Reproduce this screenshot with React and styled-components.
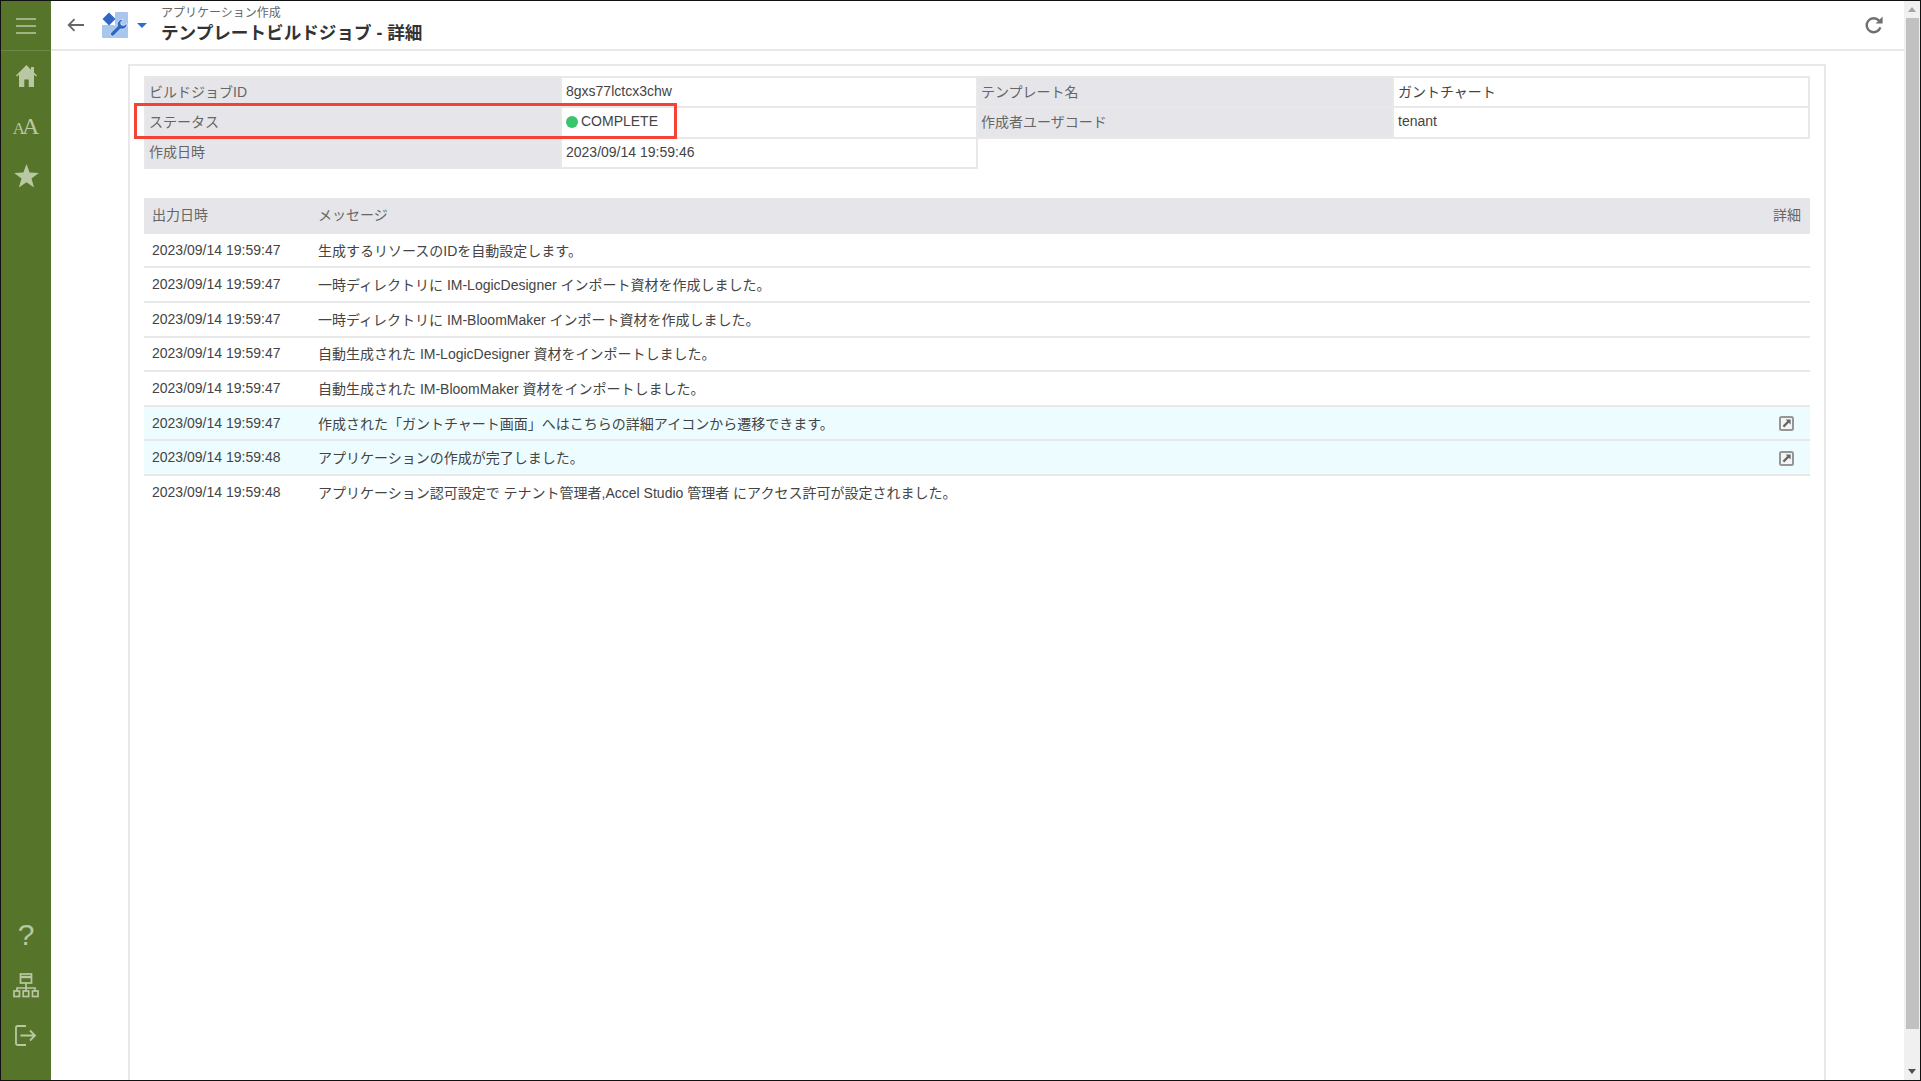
import React from "react";
import styled, { createGlobalStyle } from "styled-components";

const infoRows = [
  [
    { label: "ビルドジョブID", value: "8gxs77lctcx3chw" },
    { label: "テンプレート名", value: "ガントチャート" },
  ],
  [
    { label: "ステータス", value: "COMPLETE", status: true },
    { label: "作成者ユーザコード", value: "tenant" },
  ],
  [{ label: "作成日時", value: "2023/09/14 19:59:46" }],
];

const logs = [
  { date: "2023/09/14 19:59:47", message: "生成するリソースのIDを自動設定します。" },
  { date: "2023/09/14 19:59:47", message: "一時ディレクトリに IM-LogicDesigner インポート資材を作成しました。" },
  { date: "2023/09/14 19:59:47", message: "一時ディレクトリに IM-BloomMaker インポート資材を作成しました。" },
  { date: "2023/09/14 19:59:47", message: "自動生成された IM-LogicDesigner 資材をインポートしました。" },
  { date: "2023/09/14 19:59:47", message: "自動生成された IM-BloomMaker 資材をインポートしました。" },
  { date: "2023/09/14 19:59:47", message: "作成された「ガントチャート画面」へはこちらの詳細アイコンから遷移できます。", link: true },
  { date: "2023/09/14 19:59:48", message: "アプリケーションの作成が完了しました。", link: true },
  { date: "2023/09/14 19:59:48", message: "アプリケーション認可設定で テナント管理者,Accel Studio 管理者 にアクセス許可が設定されました。" },
];

const MenuIcon = () => (
  <svg width="20" height="16" viewBox="0 0 20 16">
    <path d="M0 1h20M0 8h20M0 15h20" stroke="currentColor" strokeWidth="1.6" />
  </svg>
);

const HomeIcon = () => (
  <svg width="21" height="22" viewBox="0 0 21 22" fill="currentColor">
    <path d="M10.5 0 0 10.5l1 1 2-1.8V22h5.3v-7.5h4.4V22H18V9.7l2 1.8 1-1-3-3V2h-3v2.8z" />
  </svg>
);

const StarIcon = () => (
  <svg width="25" height="24" viewBox="0 0 25 24" fill="currentColor">
    <path d="M12.5 0 15.6 8.6 24.8 8.9 17.5 14.5 20.1 23.4 12.5 18.2 4.9 23.4 7.5 14.5.2 8.9 9.4 8.6z" />
  </svg>
);

const SitemapIcon = () => (
  <svg width="26" height="25" viewBox="0 0 26 25" fill="none" stroke="currentColor" strokeWidth="1.7">
    <rect x="7.5" y="1" width="11" height="9" />
    <path d="M7.5 4h11" strokeWidth="2.4" />
    <path d="M13 10v5M4 18v-3h18v3M13 15v3" />
    <rect x="1" y="18" width="5.5" height="5.5" />
    <rect x="10.2" y="18" width="5.5" height="5.5" />
    <rect x="19.5" y="18" width="5.5" height="5.5" />
  </svg>
);

const LogoutIcon = () => (
  <svg width="22" height="21" viewBox="0 0 22 21" fill="none" stroke="currentColor" strokeWidth="1.8">
    <path d="M11 1H2.5A1.5 1.5 0 0 0 1 2.5v16A1.5 1.5 0 0 0 2.5 20H11" />
    <path d="M5.5 10.5H20M15 5.5l5 5-5 5" />
  </svg>
);

const BackIcon = () => (
  <svg width="17" height="14" viewBox="0 0 17 14" fill="none" stroke="#666" strokeWidth="1.8">
    <path d="M17 7H2M7.5 1.2 1.7 7l5.8 5.8" />
  </svg>
);

const AppIcon = () => (
  <svg width="26" height="26" viewBox="0 0 26 26">
    <rect x="13" y="0" width="13" height="13" rx="1" fill="#a9c6ee" />
    <rect x="0" y="13" width="13" height="13" rx="1" fill="#a9c6ee" />
    <rect x="13" y="13" width="13" height="13" rx="1" fill="#a9c6ee" />
    <path d="M7 0.5 13.5 7 7 13.5 0.5 7z" fill="#2f68c4" />
    <path
      d="M25 11.5a5 5 0 0 1-6.6 5.4L12 23.5a2 2 0 0 1-3-3l6.6-6.4a5 5 0 0 1 5.6-6.6l-2.6 2.8.6 2.6 2.6.6z"
      fill="#2f68c4"
      stroke="#fff"
      strokeWidth="0.6"
    />
  </svg>
);

const RefreshIcon = () => (
  <svg width="18" height="18" viewBox="0 0 18 18" fill="none">
    <path d="M14 4.6A7 7 0 1 0 15.4 11.4" stroke="#6f6f6f" strokeWidth="2.4" />
    <path d="M17.6 0.6v7h-7z" fill="#6f6f6f" />
  </svg>
);

const LinkIcon = () => (
  <svg width="15" height="15" viewBox="0 0 15 15" fill="none">
    <rect x="1" y="1" width="13" height="13" rx="1.5" fill="#f3f5f5" stroke="#969696" strokeWidth="2" />
    <path d="M4.4 10.6 9.6 5.4" stroke="#666" strokeWidth="2.2" />
    <path d="M6.6 3.4h5v5z" fill="#666" />
  </svg>
);

const App = () => {
  return (
    <>
      <GlobalStyle />
      <Screen>
        <Sidebar>
          <MenuButton>
            <MenuIcon />
          </MenuButton>
          <NavGroup>
            <NavItem>
              <HomeIcon />
            </NavItem>
            <NavItem>
              <FontGlyph>
                <small>A</small>A
              </FontGlyph>
            </NavItem>
            <NavItem>
              <StarIcon />
            </NavItem>
          </NavGroup>
          <NavGroup>
            <NavItem>
              <HelpGlyph>?</HelpGlyph>
            </NavItem>
            <NavItem>
              <SitemapIcon />
            </NavItem>
            <NavItem>
              <LogoutIcon />
            </NavItem>
          </NavGroup>
        </Sidebar>

        <Main>
          <Header>
            <BackIcon />
            <AppMenu>
              <AppIcon />
              <Caret />
            </AppMenu>
            <TitleBlock>
              <SubTitle>アプリケーション作成</SubTitle>
              <Title>テンプレートビルドジョブ - 詳細</Title>
            </TitleBlock>
            <RefreshButton>
              <RefreshIcon />
            </RefreshButton>
          </Header>

          <Content>
            <Panel>
              <InfoTable>
                {infoRows.flat().map((item) => (
                  <React.Fragment key={item.label}>
                    <InfoLabel>{item.label}</InfoLabel>
                    <InfoValue>
                      {item.status && <StatusDot />}
                      {item.value}
                    </InfoValue>
                  </React.Fragment>
                ))}
                <Highlight />
              </InfoTable>

              <LogHead>
                <DateCell>出力日時</DateCell>
                <MessageCell>メッセージ</MessageCell>
                <DetailCell>詳細</DetailCell>
              </LogHead>
              {logs.map((log) => (
                <LogRow key={log.message} $link={log.link}>
                  <DateCell>{log.date}</DateCell>
                  <MessageCell>{log.message}</MessageCell>
                  <DetailCell>{log.link && <LinkIcon />}</DetailCell>
                </LogRow>
              ))}
            </Panel>
          </Content>
        </Main>

        <Scrollbar>
          <ArrowUp />
          <Thumb />
          <ArrowDown />
        </Scrollbar>
      </Screen>
    </>
  );
};

const GlobalStyle = createGlobalStyle`
  html, body {
    margin: 0;
    height: 100%;
    overflow: hidden;
    background: #fff;
  }
  body {
    font-family: "Liberation Sans", "Noto Sans CJK JP", sans-serif;
    font-size: 14px;
    color: #555;
  }
`;

const Screen = styled.div`
  box-sizing: border-box;
  display: flex;
  height: 100vh;
  border: 1px solid #111;
`;

const Sidebar = styled.nav`
  flex: 0 0 50px;
  display: flex;
  flex-direction: column;
  background: #57752a;
  color: #b9c8a3;
`;

const MenuButton = styled.div`
  box-sizing: border-box;
  height: 50px;
  display: flex;
  align-items: center;
  justify-content: center;
  border-bottom: 1px solid #6d8746;
`;

const NavGroup = styled.div`
  display: flex;
  flex-direction: column;

  &:last-child {
    margin-top: auto;
    padding-bottom: 20px;
  }
`;

const NavItem = styled.div`
  height: 50px;
  display: flex;
  align-items: center;
  justify-content: center;
`;

const FontGlyph = styled.span`
  font-family: "Liberation Serif", serif;
  font-size: 24px;
  line-height: 1;

  small {
    font-size: 17px;
    margin-right: -3px;
  }
`;

const HelpGlyph = styled.span`
  font-size: 30px;
  line-height: 1;
`;

const Main = styled.div`
  flex: 1;
  min-width: 0;
  display: flex;
  flex-direction: column;
`;

const Header = styled.header`
  box-sizing: border-box;
  flex: 0 0 50px;
  display: flex;
  align-items: center;
  padding: 0 21px 0 16px;
  border-bottom: 2px solid #e8e8e8;
`;

const AppMenu = styled.div`
  display: flex;
  align-items: center;
  gap: 9px;
  margin-left: 18px;
`;

const Caret = styled.span`
  width: 0;
  height: 0;
  border-left: 5px solid transparent;
  border-right: 5px solid transparent;
  border-top: 5px solid #2a6fc9;
`;

const TitleBlock = styled.div`
  margin-left: 14px;
  display: flex;
  flex-direction: column;
`;

const SubTitle = styled.div`
  font-size: 12px;
  line-height: 16px;
  color: #666;
`;

const Title = styled.h1`
  margin: 0;
  font-size: 17.6px;
  line-height: 24px;
  font-weight: 700;
  color: #333;
`;

const RefreshButton = styled.div`
  margin-left: auto;
  display: flex;
`;

const Content = styled.div`
  flex: 1;
  min-height: 0;
  display: flex;
  padding: 13px 78px 0 77px;
`;

const Panel = styled.section`
  flex: 1;
  min-width: 0;
  box-sizing: border-box;
  padding: 10px 14px 0;
  border: 2px solid #e8e8e8;
  border-bottom: 0;
`;

const InfoTable = styled.div`
  position: relative;
  display: grid;
  grid-template-columns: repeat(4, 1fr);
  grid-auto-rows: 30.3px;
  margin-bottom: 29px;
  border-top: 2px solid #e8e8e8;
  border-left: 2px solid #e8e8e8;
`;

const InfoLabel = styled.div`
  box-sizing: border-box;
  display: flex;
  align-items: center;
  padding: 0 0 3px 3px;
  background: #e6e6ea;
  color: #666;
  border-right: 2px solid #e8e8e8;
  border-bottom: 2px solid #e8e8e8;
`;

const InfoValue = styled.div`
  box-sizing: border-box;
  display: flex;
  align-items: center;
  padding: 0 0 2px 4px;
  color: #444;
  border-right: 2px solid #e8e8e8;
  border-bottom: 2px solid #e8e8e8;
`;

const StatusDot = styled.span`
  width: 12px;
  height: 12px;
  margin: 2px 3px 0 0;
  border-radius: 50%;
  background: #3cc46c;
`;

const Highlight = styled.div`
  position: absolute;
  left: -12px;
  top: 25px;
  width: 543px;
  height: 36px;
  box-sizing: border-box;
  border: 3px solid #f44336;
`;

const LogHead = styled.div`
  box-sizing: border-box;
  display: flex;
  align-items: center;
  height: 36px;
  padding-bottom: 3px;
  background: #e6e6ea;
  color: #666;
`;

const LogRow = styled.div`
  box-sizing: border-box;
  display: flex;
  align-items: center;
  height: 34.6px;
  padding-bottom: 1px;
  color: #444;
  background: ${(props) => (props.$link ? "#edfdff" : "#fff")};
  border-bottom: 2px solid #e8e8e8;

  &:last-child {
    border-bottom-color: transparent;
  }
`;

const DateCell = styled.div`
  flex: 0 0 174px;
  box-sizing: border-box;
  padding-left: 8px;
`;

const MessageCell = styled.div`
  flex: 1;
  min-width: 0;
`;

const DetailCell = styled.div`
  flex: 0 0 auto;
  display: flex;
  padding-right: 9px;
  padding-left: 4px;

  svg {
    margin: 2px 7px 0 0;
  }
`;

const Scrollbar = styled.div`
  flex: 0 0 16px;
  display: flex;
  flex-direction: column;
  align-items: center;
  background: #f0f0f0;
`;

const ArrowUp = styled.span`
  margin: 6px 0 6px;
  width: 0;
  height: 0;
  border-left: 4px solid transparent;
  border-right: 4px solid transparent;
  border-bottom: 5px solid #a3a3a3;
`;

const Thumb = styled.div`
  flex: 0 0 1011px;
  width: 13px;
  background: #c1c1c1;
`;

const ArrowDown = styled.span`
  margin: auto 0 6px;
  width: 0;
  height: 0;
  border-left: 4px solid transparent;
  border-right: 4px solid transparent;
  border-top: 5px solid #505050;
`;

export default App;
